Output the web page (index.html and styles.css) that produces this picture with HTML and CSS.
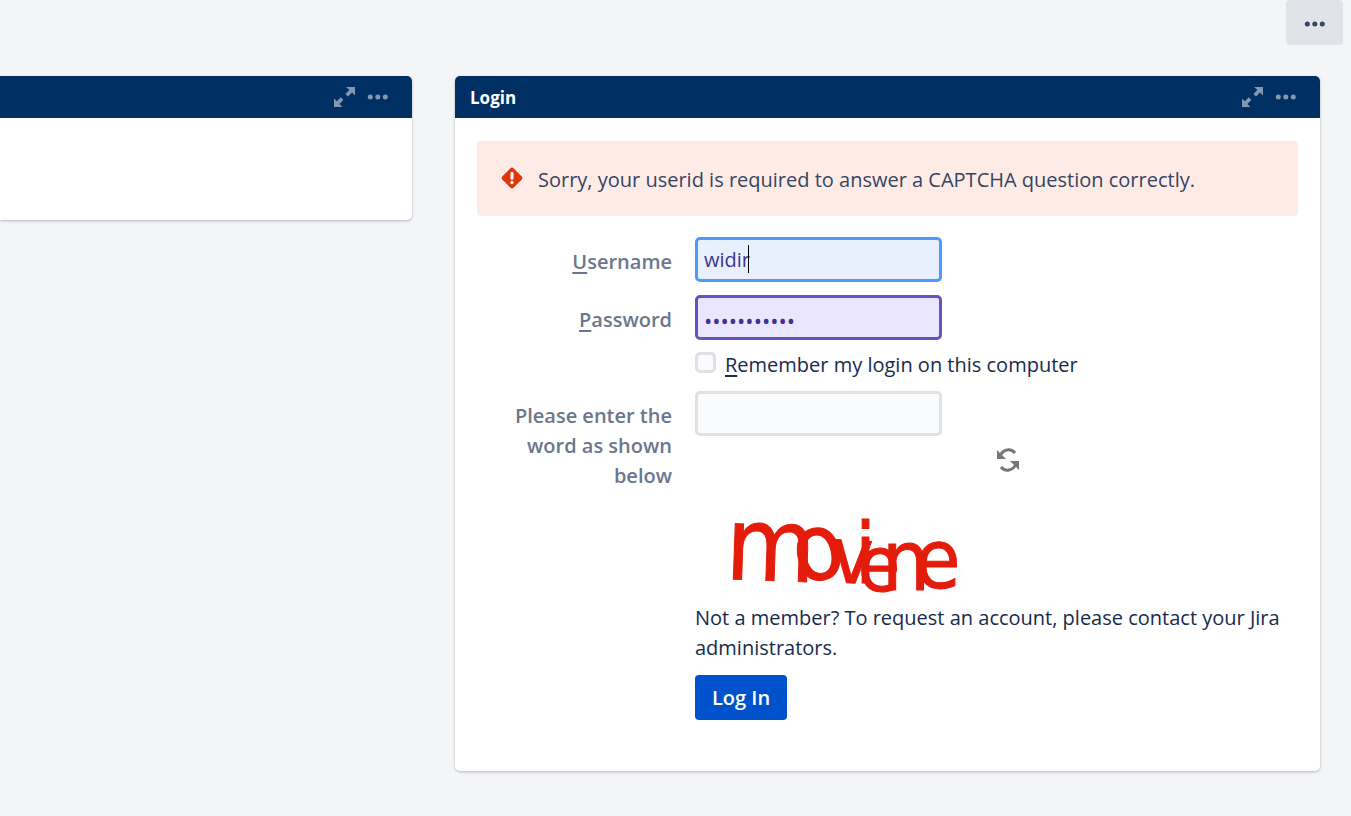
FILE: index.html
```html
<!DOCTYPE html>
<html lang="en">
<head>
<meta charset="utf-8">
<meta name="viewport" content="width=device-width, initial-scale=1">
<title>System Dashboard</title>
<link rel="stylesheet" href="styles.css">
</head>
<body>
<svg class="defs" aria-hidden="true">
  <symbol id="expand" viewBox="0 0 22 22">
    <path d="M13 1H22v8.500l-3-3-4 4-2.600-2.600 4-4z"/>
    <path d="M9.500 21H1v-8.500l2.800 2.800 4-4 2.600 2.600-4 4z"/>
  </symbol>
  <symbol id="more" viewBox="0 0 22 22">
    <circle cx="3.300" cy="11" r="2.500"/><circle cx="10.800" cy="11" r="2.500"/><circle cx="18.300" cy="11" r="2.500"/>
  </symbol>
</svg>
<header class="toolbar">
  <button class="tools" type="button" aria-label="Dashboard tools"><svg class="icon"><use href="#more"/></svg></button>
</header>
<main class="dashboard">
  <section class="gadget gadget-first" aria-label="Introduction">
    <div class="gadget-head">
      <div class="gadget-actions">
        <button type="button" aria-label="Maximize"><svg class="icon"><use href="#expand"/></svg></button>
        <button type="button" aria-label="More"><svg class="icon"><use href="#more"/></svg></button>
      </div>
    </div>
    <div class="intro"></div>
  </section>
  <section class="gadget">
    <div class="gadget-head">
      <h1>Login</h1>
      <div class="gadget-actions">
        <button type="button" aria-label="Maximize"><svg class="icon"><use href="#expand"/></svg></button>
        <button type="button" aria-label="More"><svg class="icon"><use href="#more"/></svg></button>
      </div>
    </div>
    <div class="gadget-body">
      <div class="alert" role="alert">
        <svg class="icon" viewBox="0 0 22 22" aria-hidden="true">
          <rect x="3" y="3" width="16" height="16" rx="2.500" fill="#de350b" transform="rotate(45 11 11)"/>
          <rect x="9.500" y="4.800" width="3" height="8" rx="1.500" fill="#fff"/>
          <circle cx="11" cy="15.500" r="1.700" fill="#fff"/>
        </svg>
        <p>Sorry, your userid is required to answer a CAPTCHA question correctly.</p>
      </div>
      <form class="login">
        <label class="name" for="user"><u>U</u>sername</label>
        <div class="field">
          <input class="text text-focus" id="user" type="text" value="widir">
          <span class="caret"></span>
        </div>
        <label class="name" for="pass"><u>P</u>assword</label>
        <input class="text text-filled" id="pass" type="password" value="abcdefghijk">
        <div class="remember">
          <input id="remember" type="checkbox">
          <label for="remember"><u>R</u>emember my login on this computer</label>
        </div>
        <label class="name" for="captcha">Please enter the word as shown below</label>
        <div class="captcha">
          <input class="text" id="captcha" type="text">
          <div class="challenge">
            <svg class="word" viewBox="0 0 265 90" role="img" aria-label="Captcha">
              <text x="30" y="75" font-size="102" rotate="2">m</text>
              <text x="104" y="80" font-size="92" rotate="-12">o</text>
              <text x="135" y="78" font-size="78" rotate="3">v</text>
              <text x="160" y="79" font-size="84">i</text>
              <text x="163" y="87" font-size="76">e</text>
              <text x="187" y="86" font-size="84">n</text>
              <text x="220" y="84" font-size="82">e</text>
            </svg>
            <button class="refresh" type="button" aria-label="New captcha">
              <svg viewBox="0 0 24 24"><g fill="none" stroke="#777" stroke-width="3"><path d="M4 8C7 1 15 0 19 5"/><path d="M20 16C17 23 9 24 5 19"/></g><g fill="#777"><path d="M1 2v9h9z"/><path d="M23 22v-9h-9z"/></g></svg>
            </button>
          </div>
        </div>
        <p class="signup">Not a member? To request an account, please contact your Jira administrators.</p>
        <button class="submit" type="submit">Log In</button>
      </form>
    </div>
  </section>
</main>
</body>
</html>
```
FILE: styles.css
```css
* { box-sizing: border-box; }
body {
  margin: 0;
  background: #f4f5f7;
  color: #172b4d;
  font: 20px/30px "Open Sans", "Noto Sans", sans-serif;
}
p, h1 { margin: 0; }
button { border: 0; padding: 0; background: none; color: inherit; font: inherit; cursor: pointer; }
.defs { display: none; }
.icon { display: block; flex: none; width: 22px; height: 22px; fill: currentColor; }
.toolbar { display: flex; justify-content: flex-end; padding-right: 8px; }
.tools {
  display: grid;
  place-items: center;
  width: 57px;
  height: 45px;
  padding-top: 2px;
  border-radius: 4px;
  background: #e2e3e9;
  color: #344563;
}
.dashboard {
  display: grid;
  grid-template-columns: 412fr 865fr;
  gap: 43px;
  align-items: start;
  padding: 31px 31px 45px 0;
}
.gadget {
  overflow: hidden;
  border-radius: 5px;
  background: #fff;
  box-shadow: 0 1px 3px rgba(9, 30, 66, 0.28);
}
.gadget-first { border-radius: 0 5px 5px 0; }
.gadget-head {
  display: flex;
  align-items: center;
  height: 42px;
  padding: 0 23px 0 15px;
  background: #003063;
}
.gadget-head h1 { padding-top: 2px; color: #fff; font-size: 17px; font-weight: 700; }
.gadget-actions { display: flex; gap: 12px; margin-left: auto; color: #8298b0; }
.intro { height: 102px; }
.gadget-body { padding: 23px 22px 51px; }
.alert {
  display: flex;
  align-items: flex-start;
  gap: 15px;
  padding: 24px 24px 21px;
  border-radius: 4px;
  background: #ffebe6;
  color: #344563;
}
.alert .icon { margin-top: 2px; }
.login {
  display: grid;
  grid-template-columns: 195px 1fr;
  column-gap: 23px;
  justify-items: start;
  align-items: start;
  margin-top: 21px;
}
.name {
  justify-self: end;
  width: 164px;
  padding-top: 10px;
  color: #6b778c;
  font-weight: 600;
  text-align: right;
}
u { text-underline-offset: 3px; text-decoration-thickness: 2px; }
.text {
  display: block;
  width: 247px;
  height: 45px;
  padding: 0 6px;
  border: 3px solid #dfe1e6;
  border-radius: 5px;
  outline: 0;
  background: #fafbfc;
  color: #403294;
  font: inherit;
}
.field { position: relative; margin-bottom: 13px; }
.text-focus { border-color: #4c9aff; background: #e8f0fe; }
.text-filled { padding-top: 4px; border-color: #6554c0; background: #eae6ff; font-size: 22px; }
.caret { position: absolute; top: 8px; left: 53px; width: 1px; height: 28px; background: #000; }
.remember { grid-column: 2; display: flex; gap: 9px; margin: 10px 0 11px; }
.remember input {
  appearance: none;
  width: 21px;
  height: 21px;
  margin: 2px 0 0;
  border: 3px solid #dfe1e6;
  border-radius: 5px;
  background: #fafbfc;
}
.challenge { display: flex; align-items: flex-start; gap: 36px; padding-top: 12px; }
.word {
  overflow: visible;
  width: 265px;
  height: 90px;
  margin-top: 56px;
  fill: #e41c0c;
  stroke: #e41c0c;
  stroke-width: 1px;
  font-family: "DejaVu Sans Condensed", "DejaVu Sans", sans-serif;
}
.refresh { width: 24px; height: 24px; }
.refresh svg { display: block; }
.signup, .submit { grid-column: 2; }
.signup { margin: 9px 0 12px; }
.submit {
  height: 45px;
  padding: 0 17px;
  border-radius: 4px;
  background: #0052cc;
  color: #fff;
  font-weight: 600;
}
```
